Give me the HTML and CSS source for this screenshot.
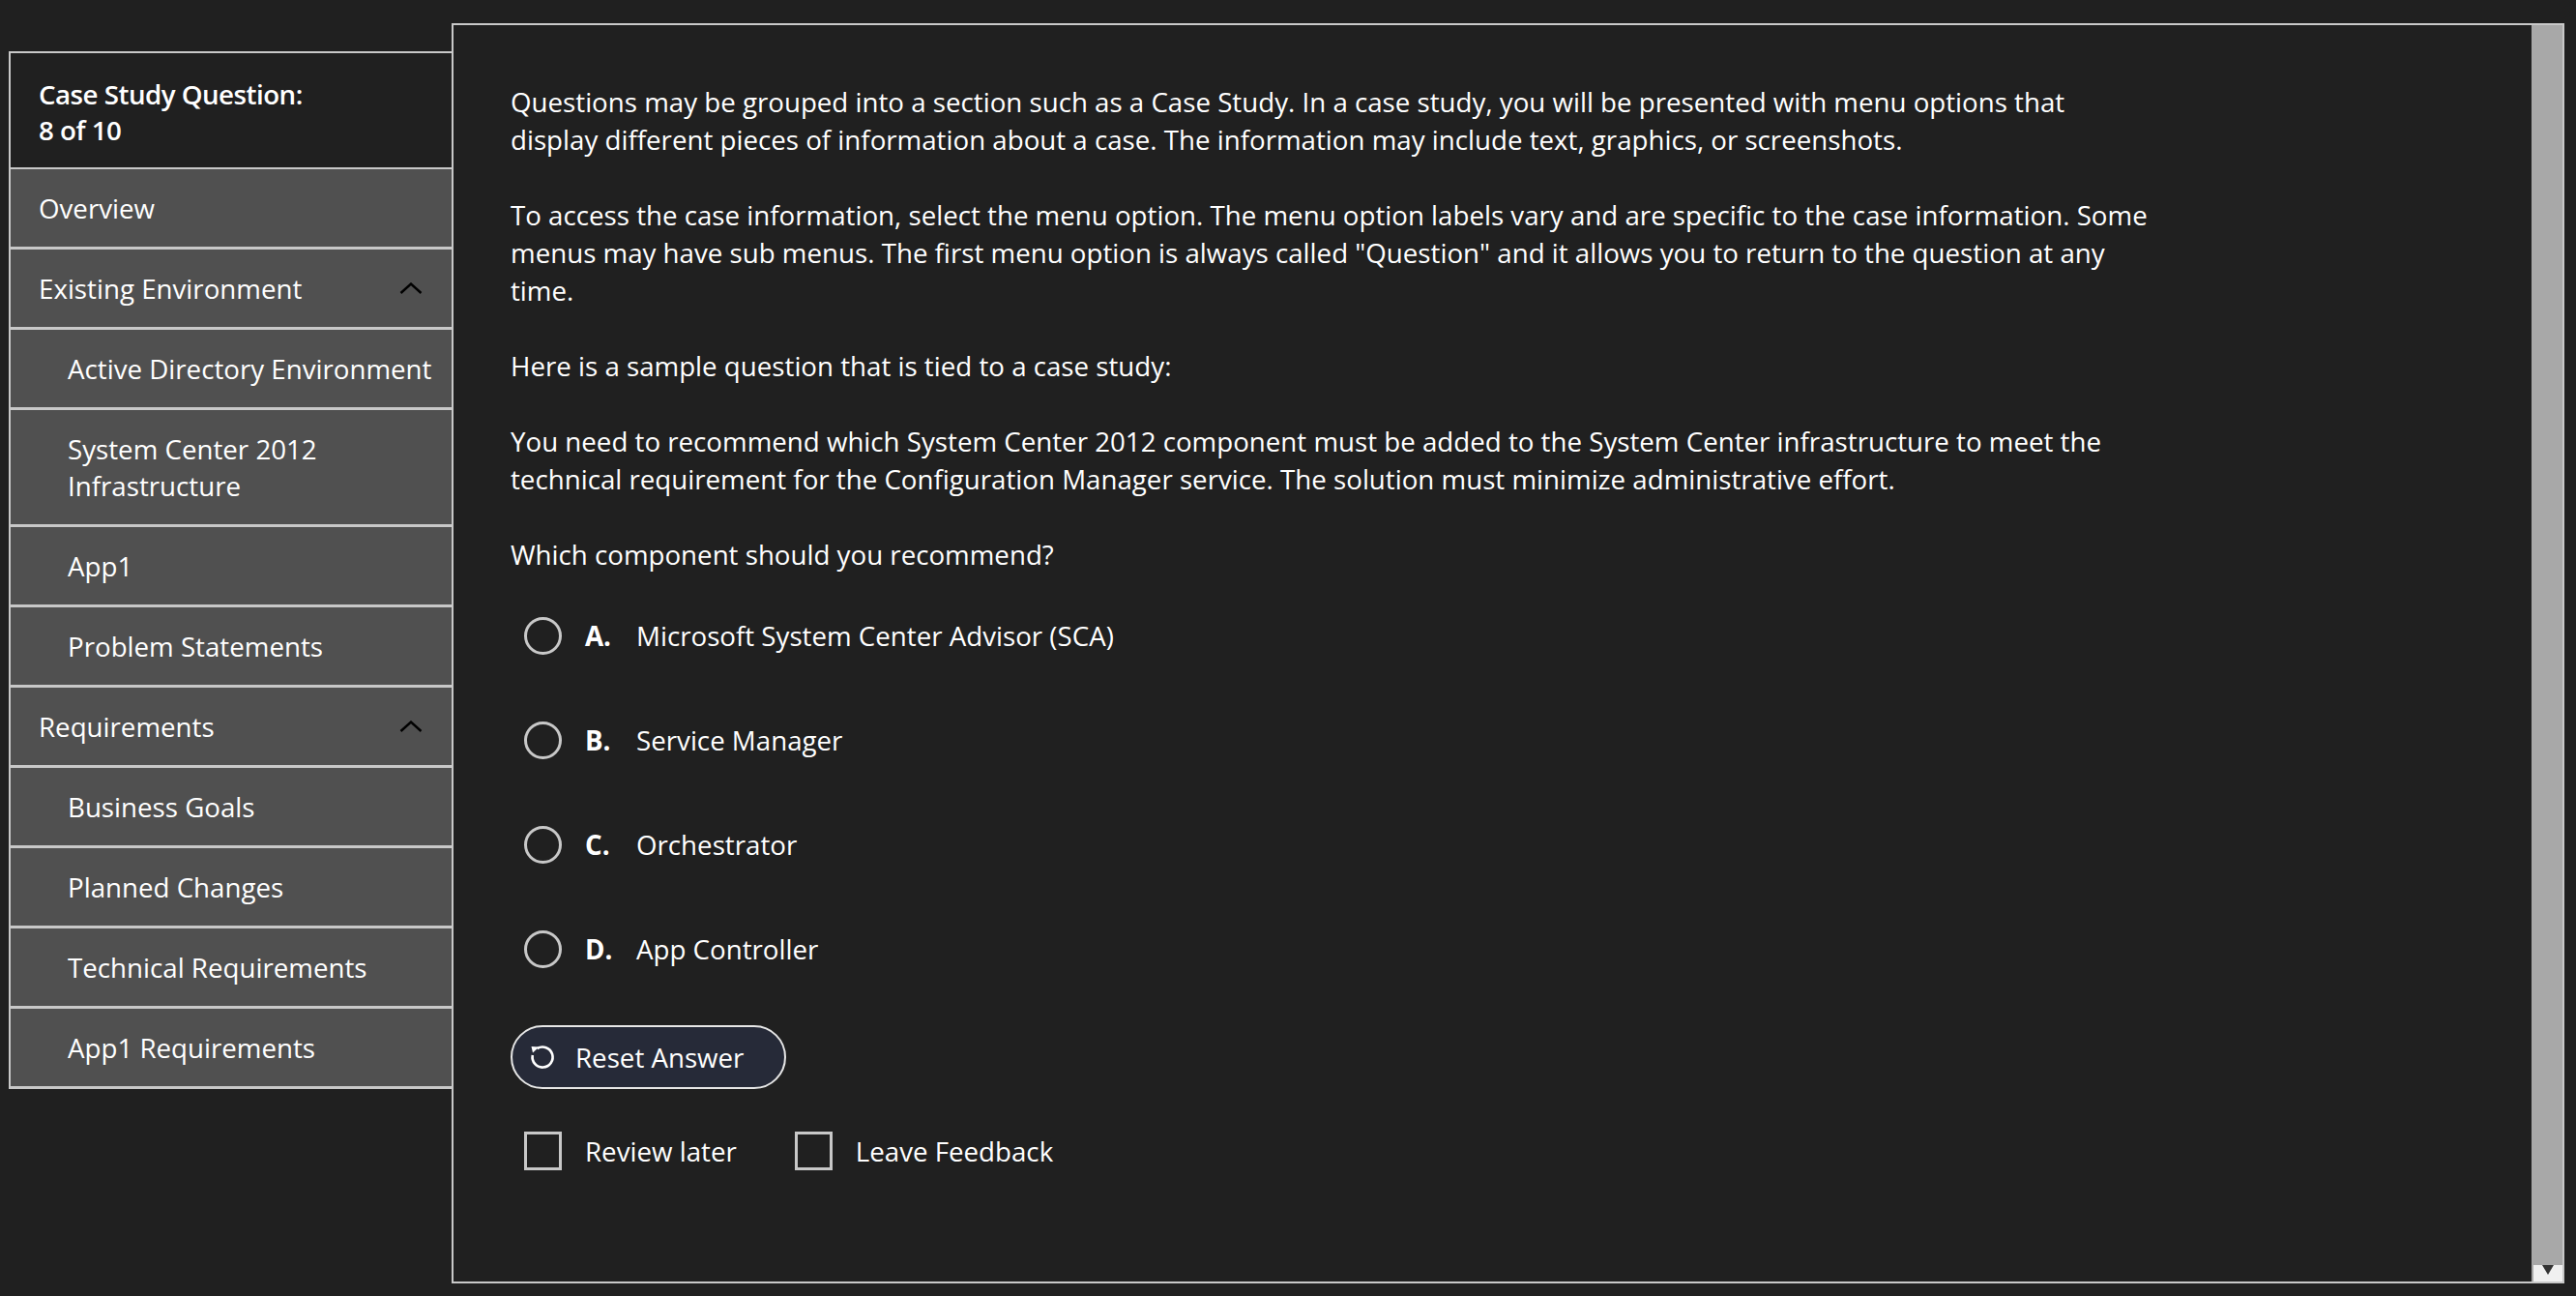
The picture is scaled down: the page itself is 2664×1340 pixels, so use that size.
FILE: index.html
```html
<!DOCTYPE html>
<html lang="en">
<head>
<meta charset="utf-8">
<title>Case Study Question</title>
<link rel="stylesheet" href="styles.css">
</head>
<body>
<div class="app">
  <nav class="sidebar">
    <div class="side-head">Case Study Question:<br>8 of 10</div>
    <ul class="menu">
      <li class="item">Overview</li>
      <li class="item group"><span>Existing Environment</span><svg class="chev" viewBox="0 0 24 12"><path d="M1.5 11 L12 1.5 L22.5 11"/></svg></li>
      <li class="item sub">Active Directory Environment</li>
      <li class="item sub">System Center 2012<br>Infrastructure</li>
      <li class="item sub">App1</li>
      <li class="item sub">Problem Statements</li>
      <li class="item group"><span>Requirements</span><svg class="chev" viewBox="0 0 24 12"><path d="M1.5 11 L12 1.5 L22.5 11"/></svg></li>
      <li class="item sub">Business Goals</li>
      <li class="item sub">Planned Changes</li>
      <li class="item sub">Technical Requirements</li>
      <li class="item sub">App1 Requirements</li>
    </ul>
  </nav>
  <main class="panel">
    <div class="content">
      <p>Questions may be grouped into a section such as a Case Study. In a case study, you will be presented with menu options that display different pieces of information about a case. The information may include text, graphics, or screenshots.</p>
      <p>To access the case information, select the menu option. The menu option labels vary and are specific to the case information. Some menus may have sub menus. The first menu option is always called "Question" and it allows you to return to the question at any time.</p>
      <p>Here is a sample question that is tied to a case study:</p>
      <p>You need to recommend which System Center 2012 component must be added to the System Center infrastructure to meet the technical requirement for the Configuration Manager service. The solution must minimize administrative effort.</p>
      <p class="last">Which component should you recommend?</p>
      <ul class="options">
        <li class="option"><span class="radio"></span><span class="letter">A.</span><span>Microsoft System Center Advisor (SCA)</span></li>
        <li class="option"><span class="radio"></span><span class="letter">B.</span><span>Service Manager</span></li>
        <li class="option"><span class="radio"></span><span class="letter">C.</span><span>Orchestrator</span></li>
        <li class="option"><span class="radio"></span><span class="letter">D.</span><span>App Controller</span></li>
      </ul>
      <button class="reset"><svg class="reset-icon" viewBox="0 0 30 30"><path class="arc" d="M9.5 6.2 A10.5 10.5 0 1 1 4.8 13"/><path class="head" d="M3.5 4 L11.5 4.5 L5 10.5 Z"/></svg><span>Reset Answer</span></button>
      <div class="checks">
        <label class="check"><span class="box"></span><span>Review later</span></label>
        <label class="check"><span class="box"></span><span>Leave Feedback</span></label>
      </div>
    </div>
    <div class="scrollbar"><div class="sb-down"></div></div>
  </main>
</div>
</body>
</html>
```
FILE: styles.css
```css
* { box-sizing: border-box; }
html, body { margin: 0; padding: 0; }
body {
  background: #202020;
  color: #ffffff;
  font-family: "Open Sans", "Noto Sans", sans-serif;
  font-size: 27.7px;
}
.app {
  display: flex;
  align-items: flex-start;
  height: 1340px;
  padding: 24px 12px 13px 9px;
}
.sidebar {
  flex: none;
  width: 458px;
  margin-top: 29px;
  border-left: 2px solid #c8c8c8;
  border-top: 2px solid #c8c8c8;
}
.side-head {
  height: 120px;
  display: flex;
  align-items: center;
  padding: 3px 0 0 29px;
  font-weight: 600;
  letter-spacing: -0.5px;
  line-height: 37px;
  border-bottom: 2px solid #c8c8c8;
}
.menu { list-style: none; margin: 0; padding: 0; }
.item {
  display: flex;
  align-items: center;
  justify-content: space-between;
  min-height: 83px;
  padding: 21px 8px 21px 29px;
  line-height: 38px;
  background: #505050;
  border-bottom: 3px solid #c8c8c8;
}
.item:first-child { min-height: 81px; }
.item.group { min-height: 82px; }
.item.sub { padding-left: 59px; }
.chev { width: 24px; height: 12px; flex: none; margin-right: 22px; }
.chev path { fill: none; stroke: #000; stroke-width: 2.4; }

.panel {
  flex: 1;
  display: flex;
  height: 1303px;
  border: 2px solid #c8c8c8;
}
.content { flex: 1; padding: 60px 0 0 59px; }
.content p { margin: 0 0 39px; line-height: 39px; max-width: 1698px; }
.content p.last { margin-bottom: 10px; }
.options { list-style: none; margin: 0; padding: 0; }
.option { display: flex; align-items: center; height: 108px; }
.radio {
  width: 39px; height: 39px;
  margin: 0 24px 0 14px;
  border: 3px solid #c8c8c8;
  border-radius: 50%;
}
.letter { width: 53px; font-weight: 700; }
.reset {
  display: flex;
  align-items: center;
  height: 66px;
  margin-top: 25px;
  padding: 0 42px 0 16px;
  background: #262a38;
  border: 2px solid #e6e6e6;
  border-radius: 33px;
  color: #ffffff;
  font: inherit;
}
.reset-icon { width: 30px; height: 30px; margin-right: 19px; }
.reset-icon .arc { fill: none; stroke: #fff; stroke-width: 2.6; }
.reset-icon .head { fill: #fff; }
.checks { display: flex; align-items: center; margin-top: 44px; }
.check { display: flex; align-items: center; margin-right: 60px; }
.box {
  width: 39px; height: 40px;
  margin: 0 24px 0 14px;
  border: 3px solid #c8c8c8;
}
.check + .check .box { margin-left: 0; }
.scrollbar {
  flex: none;
  width: 32px;
  display: flex;
  flex-direction: column;
  justify-content: flex-end;
  align-items: flex-end;
  background: #a8a8a8;
}
.sb-down {
  width: 30px; height: 17px;
  display: flex; justify-content: center;
  background: #f0f0f0;
}
.sb-down::after {
  content: "";
  border-left: 6px solid transparent;
  border-right: 6px solid transparent;
  border-top: 10px solid #333;
}
```
